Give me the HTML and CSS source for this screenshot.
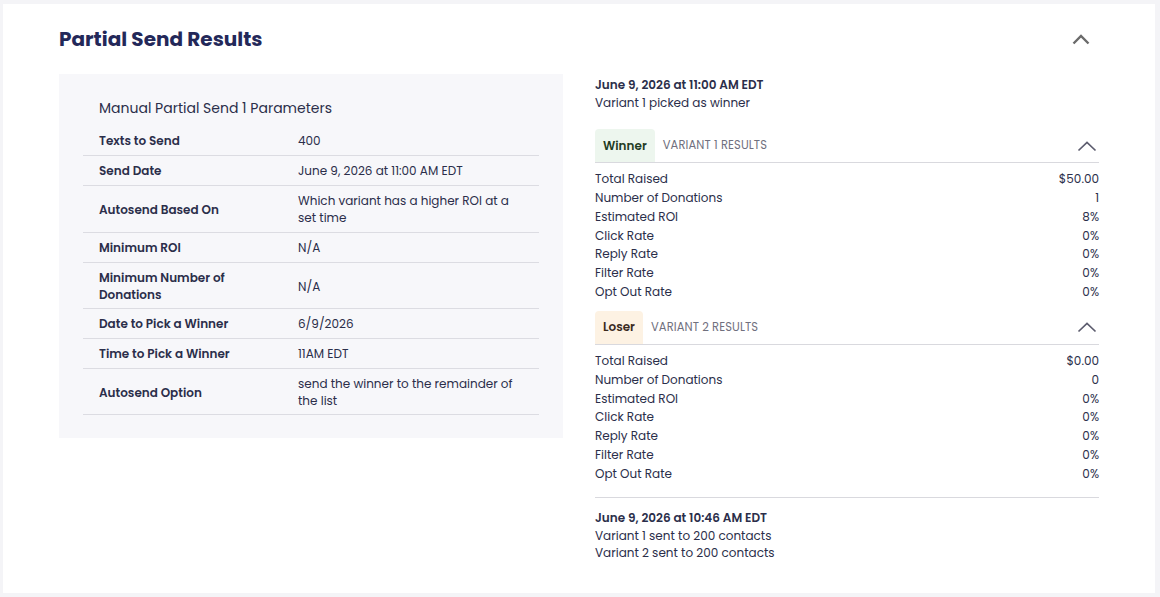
FILE: index.html
```html
<!DOCTYPE html>
<html lang="en">
<head>
<meta charset="utf-8">
<title>Partial Send Results</title>
<link rel="stylesheet" href="styles.css">
</head>
<body>
<section class="card">
  <header class="card-head">
    <h2 class="card-title">Partial Send Results</h2>
    <button class="collapse-btn" type="button" aria-label="Collapse">
      <svg width="18" height="11" viewBox="0 0 18 11"><path d="M1.5 9.5 L9 2 L16.5 9.5" fill="none" stroke="#6b6b6b" stroke-width="2.4"/></svg>
    </button>
  </header>

  <div class="columns">
    <div class="params">
      <h3 class="params-title">Manual Partial Send 1 Parameters</h3>
      <table class="params-table">
        <colgroup><col class="col-label"><col></colgroup>
        <tbody>
          <tr><th>Texts to Send</th><td>400</td></tr>
          <tr><th>Send Date</th><td>June 9, 2026 at 11:00 AM EDT</td></tr>
          <tr><th>Autosend Based On</th><td>Which variant has a higher ROI at a set time</td></tr>
          <tr><th>Minimum ROI</th><td>N/A</td></tr>
          <tr><th>Minimum Number of Donations</th><td>N/A</td></tr>
          <tr><th>Date to Pick a Winner</th><td>6/9/2026</td></tr>
          <tr><th>Time to Pick a Winner</th><td>11AM EDT</td></tr>
          <tr><th>Autosend Option</th><td>send the winner to the remainder of the list</td></tr>
        </tbody>
      </table>
    </div>

    <div class="timeline">
      <div class="event">
        <div class="event-time">June 9, 2026 at 11:00 AM EDT</div>
        <div class="event-line">Variant 1 picked as winner</div>
      </div>

      <div class="variant">
        <div class="variant-head">
          <span class="badge badge-win">Winner</span>
          <span class="variant-name">VARIANT 1 RESULTS</span>
          <svg class="chev" width="20" height="12" viewBox="0 0 20 12"><path d="M1.5 10.5 L10 2.5 L18.5 10.5" fill="none" stroke="#5c5c6e" stroke-width="1.7"/></svg>
        </div>
        <dl class="stats">
          <div class="stat"><dt>Total Raised</dt><dd>$50.00</dd></div>
          <div class="stat"><dt>Number of Donations</dt><dd>1</dd></div>
          <div class="stat"><dt>Estimated ROI</dt><dd>8%</dd></div>
          <div class="stat"><dt>Click Rate</dt><dd>0%</dd></div>
          <div class="stat"><dt>Reply Rate</dt><dd>0%</dd></div>
          <div class="stat"><dt>Filter Rate</dt><dd>0%</dd></div>
          <div class="stat"><dt>Opt Out Rate</dt><dd>0%</dd></div>
        </dl>
      </div>

      <div class="variant">
        <div class="variant-head">
          <span class="badge badge-lose">Loser</span>
          <span class="variant-name">VARIANT 2 RESULTS</span>
          <svg class="chev" width="20" height="12" viewBox="0 0 20 12"><path d="M1.5 10.5 L10 2.5 L18.5 10.5" fill="none" stroke="#5c5c6e" stroke-width="1.7"/></svg>
        </div>
        <dl class="stats">
          <div class="stat"><dt>Total Raised</dt><dd>$0.00</dd></div>
          <div class="stat"><dt>Number of Donations</dt><dd>0</dd></div>
          <div class="stat"><dt>Estimated ROI</dt><dd>0%</dd></div>
          <div class="stat"><dt>Click Rate</dt><dd>0%</dd></div>
          <div class="stat"><dt>Reply Rate</dt><dd>0%</dd></div>
          <div class="stat"><dt>Filter Rate</dt><dd>0%</dd></div>
          <div class="stat"><dt>Opt Out Rate</dt><dd>0%</dd></div>
        </dl>
      </div>

      <div class="event event-sep">
        <div class="event-time">June 9, 2026 at 10:46 AM EDT</div>
        <div class="event-line">Variant 1 sent to 200 contacts</div>
        <div class="event-line">Variant 2 sent to 200 contacts</div>
      </div>
    </div>
  </div>
</section>
</body>
</html>
```

FILE: styles.css
```css
* {
  box-sizing: border-box;
}

html, body {
  margin: 0;
  padding: 0;
}

body {
  background: #f4f4f7;
  font-family: "Poppins", "Inter", "Noto Sans", sans-serif;
  color: #2b2e4a;
  font-size: 12px;
  padding: 4px 5px 4px 3px;
}

.card {
  background: #ffffff;
  height: 589px;
  padding: 20px 56px 0;
}

.card-head {
  display: flex;
  align-items: center;
  justify-content: space-between;
  height: 30px;
}

.card-title {
  margin: 0;
  font-size: 20px;
  font-weight: 700;
  color: #232859;
  letter-spacing: 0;
}

.collapse-btn {
  border: 0;
  background: none;
  padding: 0;
  margin-right: 9px;
  display: flex;
}

.columns {
  margin-top: 20px;
  display: grid;
  grid-template-columns: 504px 504px;
  gap: 32px;
  align-items: start;
}

/* left: parameter summary */
.params {
  background: #f7f7fa;
  padding: 24px 24px 23px;
}

.params-title {
  margin: 0 0 8px 16px;
  font-size: 14px;
  font-weight: 400;
  line-height: 20px;
  color: #2b2e4a;
}

.params-table {
  width: 100%;
  border-collapse: collapse;
  table-layout: fixed;
}

.col-label {
  width: 199px;
}

.params-table th,
.params-table td {
  text-align: left;
  vertical-align: middle;
  padding: 6px 16px;
  line-height: 17px;
  border-bottom: 1px solid #dcdce2;
  font-size: 12px;
}

.params-table th {
  font-weight: 600;
  color: #2b2e4a;
}

.params-table td {
  font-weight: 400;
}

.params-table tr:nth-child(5) th,
.params-table tr:nth-child(5) td,
.params-table tr:nth-child(8) th,
.params-table tr:nth-child(8) td {
  padding-bottom: 5px;
}

/* right: timeline of results */
.timeline {
  padding-top: 2px;
}

.event-time {
  font-weight: 600;
  line-height: 18px;
}

.event-line {
  line-height: 17px;
}

.variant {
  margin-top: 18px;
}

.variant + .variant {
  margin-top: 9px;
}

.variant-head {
  display: flex;
  align-items: center;
  height: 34px;
  border-bottom: 1px solid #d9d9de;
}

.badge {
  align-self: stretch;
  display: flex;
  align-items: center;
  padding: 0 8px;
  border-radius: 4px 4px 0 0;
  font-weight: 600;
}

.badge-win {
  background: #edf6ee;
  color: #1f3b24;
}

.badge-lose {
  background: #fdf2e3;
  color: #3a2a1e;
}

.variant-name {
  margin-left: 8px;
  font-size: 11.5px;
  color: #70707e;
  letter-spacing: 0.1px;
}

.chev {
  margin-left: auto;
  margin-right: 2px;
}

.stats {
  margin: 7px 0 0;
}

.stat {
  display: flex;
  justify-content: space-between;
  line-height: 18.85px;
}

.stat dt,
.stat dd {
  margin: 0;
}

.event-sep {
  margin-top: 13px;
  border-top: 1px solid #d9d9de;
  padding-top: 11px;
}
```
